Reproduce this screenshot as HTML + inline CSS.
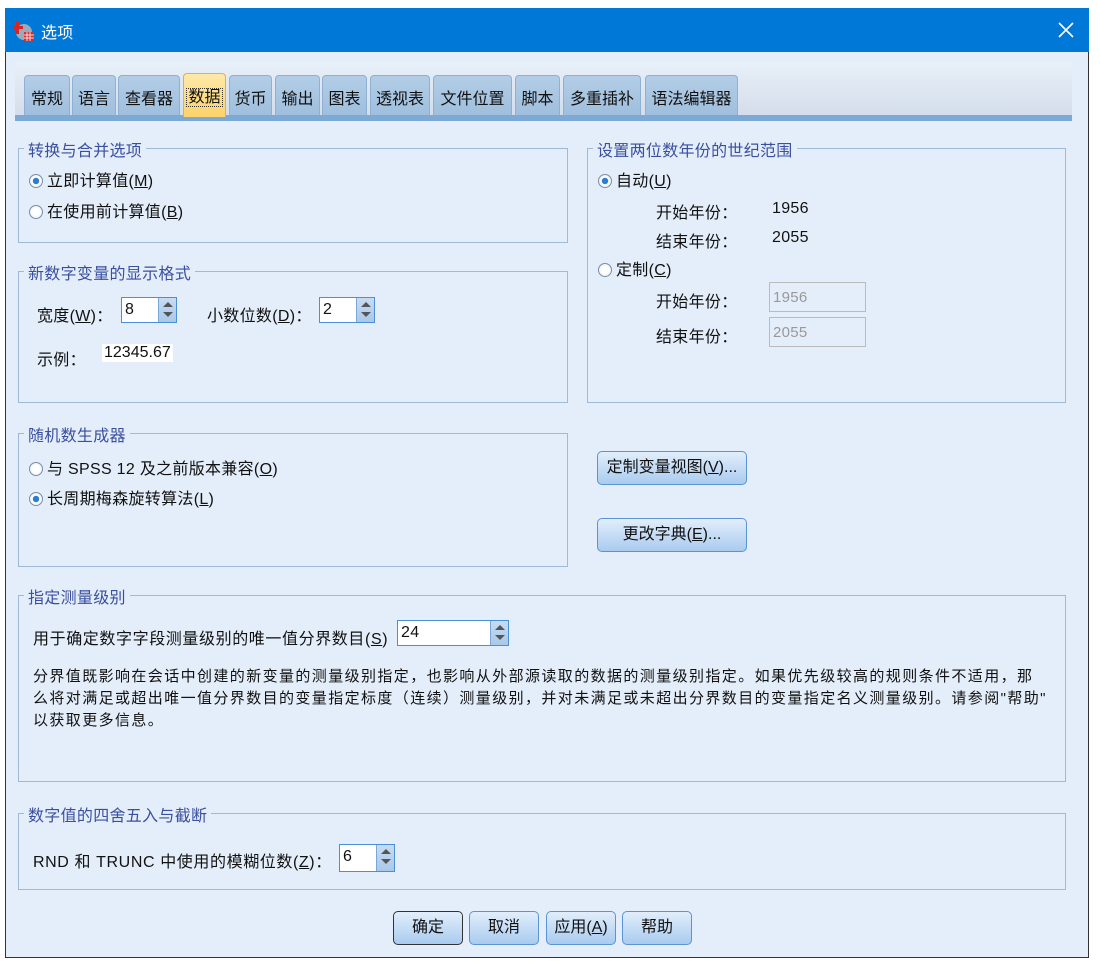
<!DOCTYPE html>
<html><head><meta charset="utf-8"><style>
*{box-sizing:border-box;margin:0;padding:0}
body{width:1100px;height:969px;background:#fff;position:relative;overflow:hidden;font-family:"Liberation Sans","Noto Sans CJK SC",sans-serif;font-size:16px;letter-spacing:.3px;color:#111}
.a{position:absolute}
#win{left:5px;top:8px;width:1084px;height:950px;background:#e4eefa;border:1px solid #333;border-top:none}
#title{left:5px;top:8px;width:1084px;height:44px;background:#0078d7;color:#fff}
.tab{position:absolute;top:75px;height:40px;background:linear-gradient(#b3cde6,#9fbfdd);border:1px solid #8fb0d2;border-bottom:none;border-radius:4px 4px 0 0;font-size:16px;letter-spacing:0;line-height:48px;text-align:center;color:#111}
.tab.sel{background:linear-gradient(#ffe9a8,#fcd26a);border-color:#e0b050;top:73px;height:44px;line-height:48px}
.grp{position:absolute;border:1px solid #9fbad6}
.gt{position:absolute;top:-12px;left:5px;background:#e4eefa;padding:0 4px;color:#3a4fa0;font-size:16px}
.rad{display:inline-block;width:14px;height:14px;border-radius:50%;border:1px solid #7a8ea8;background:radial-gradient(#fff 40%,#dfe6ee);vertical-align:-2px;margin-right:4px}
.rad.on{background:radial-gradient(#2a7ed4 35%,#fff 40%,#dfe6ee)}
.sp{position:absolute;background:#fff;border:1px solid #4b8fd8;height:26px;font-size:16px;padding-left:3px;line-height:24px}
.sp i{position:absolute;right:0;top:0;width:18px;height:24px;background:linear-gradient(#c7dcf2,#a9c8ea);border-left:1px solid #7ba7d7}
.sp i:before{content:"";position:absolute;left:4px;top:4px;border:5px solid transparent;border-bottom:5px solid #555;border-top:none}
.sp i:after{content:"";position:absolute;left:4px;top:14px;border:5px solid transparent;border-top:5px solid #555;border-bottom:none}
.btn{position:absolute;height:34px;border:1px solid #5b94d2;border-radius:5px;background:linear-gradient(#e2eefb,#a9cbef);text-align:center;line-height:32px;font-size:16px;letter-spacing:0}
.dis{position:absolute;border:1px solid #bbb;background:#e4eefa;color:#999;height:30px;width:97px;line-height:30px;padding-left:3px;font-size:15px}
u{text-decoration:underline}
</style></head><body>
<div id="win" class="a"></div>
<div id="title" class="a">
 <svg class="a" style="left:8px;top:12px" width="22" height="22" viewBox="0 0 22 22"><circle cx="11" cy="12" r="8" fill="#9ab"/><rect x="3" y="2" width="3" height="12" fill="#d22"/><rect x="0" y="6" width="10" height="3" fill="#d22"/><rect x="11" y="12" width="10" height="9" fill="#c33"/><path d="M11 15h10M11 18h10M14 12v9M17 12v9" stroke="#fff" stroke-width=".8"/></svg>
 <div class="a" style="left:36px;top:11px;font-size:16px">选项</div>
 <svg class="a" style="left:1053px;top:14px" width="16" height="16" viewBox="0 0 16 16"><path d="M1 1L15 15M15 1L1 15" stroke="#fff" stroke-width="1.6"/></svg>
</div>
<div class="a" style="left:15px;top:62px;width:1057px;height:55px;background:linear-gradient(#e8f0f9,#d3dde9)"></div>
<div class="a" style="left:15px;top:115px;width:1057px;height:6px;background:#7ca9d6"></div>
<div class="tab" style="left:24px;width:46px">常规</div>
<div class="tab" style="left:72px;width:44px">语言</div>
<div class="tab" style="left:118px;width:62px">查看器</div>
<div class="tab" style="left:229px;width:43px">货币</div>
<div class="tab" style="left:275px;width:45px">输出</div>
<div class="tab" style="left:322px;width:45px">图表</div>
<div class="tab" style="left:370px;width:60px">透视表</div>
<div class="tab" style="left:433px;width:79px">文件位置</div>
<div class="tab" style="left:515px;width:45px">脚本</div>
<div class="tab" style="left:563px;width:78px">多重插补</div>
<div class="tab" style="left:645px;width:93px">语法编辑器</div>
<div class="tab sel" style="left:183px;width:43px"><span style="border:1px dotted #333;padding:0 1px">数据</span></div>

<div class="grp" style="left:18px;top:148px;width:550px;height:95px"><div class="gt">转换与合并选项</div>
 <div class="a" style="left:10px;top:18px"><span class="rad on"></span>立即计算值(<u>M</u>)</div>
 <div class="a" style="left:10px;top:49px"><span class="rad"></span>在使用前计算值(<u>B</u>)</div></div>

<div class="grp" style="left:18px;top:271px;width:550px;height:132px"><div class="gt">新数字变量的显示格式</div>
 <div class="a" style="left:18px;top:30px">宽度(<u>W</u>)：</div>
 <div class="sp" style="left:102px;top:25px;width:56px">8<i></i></div>
 <div class="a" style="left:188px;top:30px">小数位数(<u>D</u>)：</div>
 <div class="sp" style="left:300px;top:25px;width:56px">2<i></i></div>
 <div class="a" style="left:18px;top:74px">示例：</div>
 <div class="a" style="left:83px;top:72px;background:#fff;padding:0 2px;font-size:16px;letter-spacing:0">12345.67</div></div>

<div class="grp" style="left:18px;top:433px;width:550px;height:134px"><div class="gt">随机数生成器</div>
 <div class="a" style="left:10px;top:21px"><span class="rad"></span>与 SPSS 12 及之前版本兼容(<u>O</u>)</div>
 <div class="a" style="left:10px;top:51px"><span class="rad on"></span>长周期梅森旋转算法(<u>L</u>)</div></div>

<div class="grp" style="left:587px;top:148px;width:479px;height:255px"><div class="gt">设置两位数年份的世纪范围</div>
 <div class="a" style="left:10px;top:18px"><span class="rad on"></span>自动(<u>U</u>)</div>
 <div class="a" style="left:68px;top:50px">开始年份：</div><div class="a" style="left:184px;top:51px;font-size:16px">1956</div>
 <div class="a" style="left:68px;top:79px">结束年份：</div><div class="a" style="left:184px;top:80px;font-size:16px">2055</div>
 <div class="a" style="left:10px;top:107px"><span class="rad"></span>定制(<u>C</u>)</div>
 <div class="a" style="left:68px;top:139px">开始年份：</div><div class="dis" style="left:181px;top:133px">1956</div>
 <div class="a" style="left:68px;top:174px">结束年份：</div><div class="dis" style="left:181px;top:168px">2055</div></div>

<div class="btn" style="left:597px;top:451px;width:150px">定制变量视图(<u>V</u>)...</div>
<div class="btn" style="left:597px;top:518px;width:150px">更改字典(<u>E</u>)...</div>

<div class="grp" style="left:18px;top:595px;width:1048px;height:187px"><div class="gt">指定测量级别</div>
 <div class="a" style="left:14px;top:29px;letter-spacing:.6px">用于确定数字字段测量级别的唯一值分界数目(<u>S</u>)</div>
 <div class="sp" style="left:378px;top:24px;width:112px">24<i></i></div>
 <div class="a" style="left:14px;top:70px;line-height:22px;font-size:15px;letter-spacing:1.4px;white-space:nowrap">分界值既影响在会话中创建的新变量的测量级别指定，也影响从外部源读取的数据的测量级别指定。如果优先级较高的规则条件不适用，那<br>么将对满足或超出唯一值分界数目的变量指定标度（连续）测量级别，并对未满足或未超出分界数目的变量指定名义测量级别。请参阅"帮助"<br>以获取更多信息。</div></div>

<div class="grp" style="left:18px;top:813px;width:1048px;height:77px"><div class="gt">数字值的四舍五入与截断</div>
 <div class="a" style="left:14px;top:34px;letter-spacing:.6px">RND 和 TRUNC 中使用的模糊位数(<u>Z</u>)：</div>
 <div class="sp" style="left:320px;top:30px;width:56px;height:28px">6<i style="height:26px"></i></div></div>

<div class="btn" style="left:393px;top:911px;width:70px;border-color:#333">确定</div>
<div class="btn" style="left:469px;top:911px;width:70px">取消</div>
<div class="btn" style="left:546px;top:911px;width:70px">应用(<u>A</u>)</div>
<div class="btn" style="left:622px;top:911px;width:70px">帮助</div>
</body></html>
